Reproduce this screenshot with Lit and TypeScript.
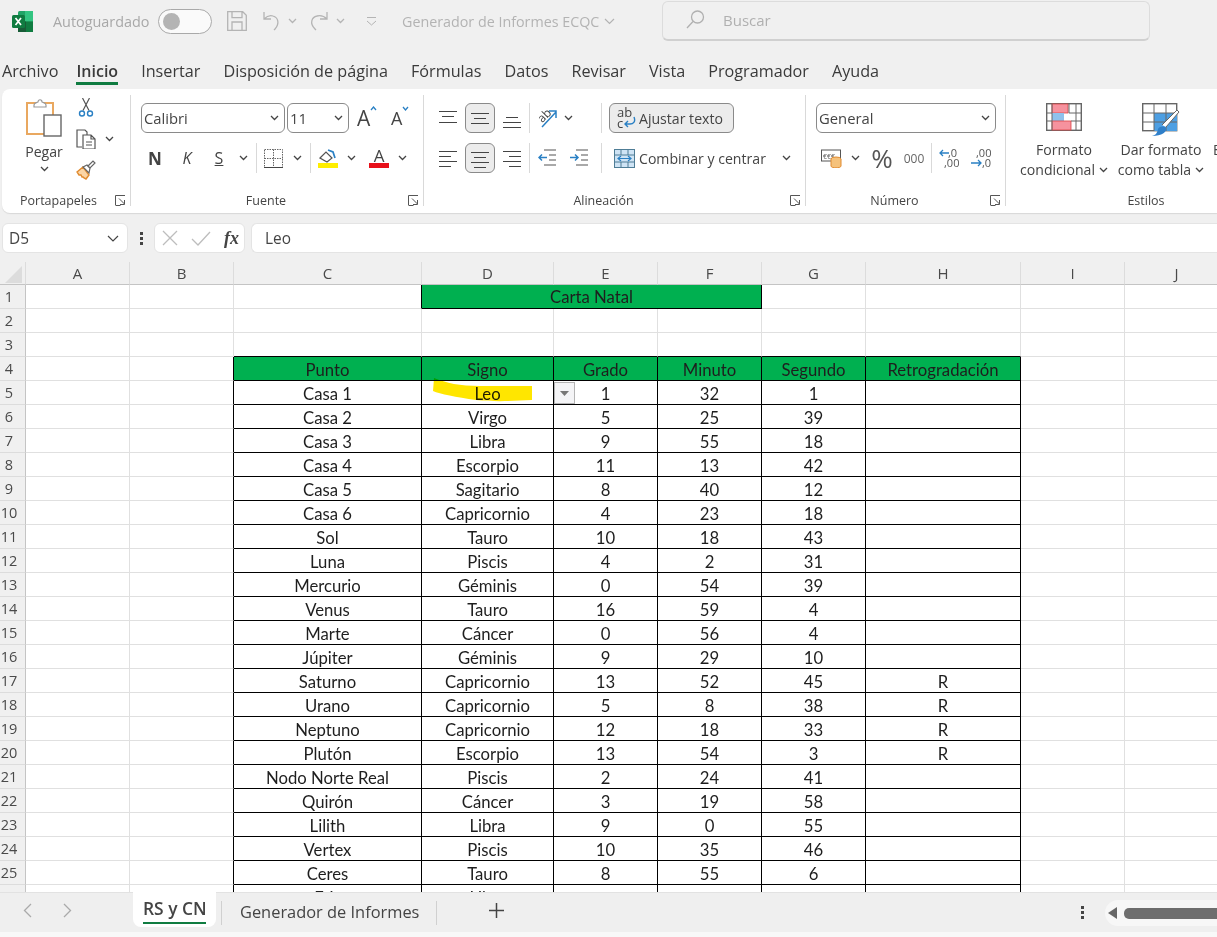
import { LitElement, html, css, svg } from "lit";
import { customElement } from "lit/decorators.js";

const chev = (c = "#444") => html`<svg class="chev" width="9" height="6" viewBox="0 0 9 6"><path d="M1 1l3.5 3.5L8 1" fill="none" stroke="${c}" stroke-width="1.3"/></svg>`;

const launcher = html`<svg class="launch" width="11" height="11" viewBox="0 0 11 11"><path d="M.5 10V.5H10M4 3.5l5.5 5.5M9.5 5v4.5H5M.5 10.5h5" fill="none" stroke="#555" stroke-width="1"/></svg>`;

const lineIcon = (rows: [number, number, number][], w = 18, h = 22, col = "#444") => html`<svg width="${w}" height="${h}" viewBox="0 0 ${w} ${h}">${rows.map(([y, a, b]) => svg`<path d="M${a} ${y}.5H${b}" stroke="${col}" stroke-width="1.2"/>`)}</svg>`;

const COLS = ["A", "B", "C", "D", "E", "F", "G", "H", "I", "J"];
type Row = [string, string, number, number, number, string?];
const DATA: Row[] = [
  ["Casa 1", "Leo", 1, 32, 1], ["Casa 2", "Virgo", 5, 25, 39], ["Casa 3", "Libra", 9, 55, 18],
  ["Casa 4", "Escorpio", 11, 13, 42], ["Casa 5", "Sagitario", 8, 40, 12], ["Casa 6", "Capricornio", 4, 23, 18],
  ["Sol", "Tauro", 10, 18, 43], ["Luna", "Piscis", 4, 2, 31], ["Mercurio", "Géminis", 0, 54, 39],
  ["Venus", "Tauro", 16, 59, 4], ["Marte", "Cáncer", 0, 56, 4], ["Júpiter", "Géminis", 9, 29, 10],
  ["Saturno", "Capricornio", 13, 52, 45, "R"], ["Urano", "Capricornio", 5, 8, 38, "R"],
  ["Neptuno", "Capricornio", 12, 18, 33, "R"], ["Plutón", "Escorpio", 13, 54, 3, "R"],
  ["Nodo Norte Real", "Piscis", 2, 24, 41], ["Quirón", "Cáncer", 3, 19, 58], ["Lilith", "Libra", 9, 0, 55],
  ["Vertex", "Piscis", 10, 35, 46], ["Ceres", "Tauro", 8, 55, 6],
];
const HEAD = ["Punto", "Signo", "Grado", "Minuto", "Segundo", "Retrogradación"];

@customElement("app-root")
export class AppRoot extends LitElement {
  static styles = css`
    :host { display: block; width: 1217px; height: 937px; overflow: hidden; background: #f0f0f0; font-family: "Open Sans", "Noto Sans", sans-serif; color: #333; }
    .app { display: flex; flex-direction: column; height: 937px; }
    svg { display: block; flex: none; }

    .title { height: 42px; margin-bottom: 6px; display: flex; align-items: center; color: #a8a8a8; font-size: 14.4px; flex: none; }
    .logo { margin-left: 12px; }
    .auto { margin-left: 20px; width: 96px; white-space: nowrap; }
    .toggle { margin-left: 9px; width: 54px; height: 25px; box-sizing: border-box; border: 1px solid #a9a9a9; border-radius: 13px; background: #fafafa; display: flex; align-items: center; padding-left: 4px; }
    .knob { width: 17px; height: 17px; border-radius: 50%; background: #b4b4b4; }
    .save { margin-left: 15px; }
    .undo { margin-left: 16px; }
    .c1 { margin-left: 7px; }
    .redo { margin-left: 10px; }
    .qa { margin-left: 21px; }
    .doc { margin-left: 25px; width: 215px; display: flex; align-items: center; gap: 5px; white-space: nowrap; font-size: 14.3px; color: #b3b3b3; }
    .search { margin-left: 45px; width: 488px; height: 40px; box-sizing: border-box; border: 1px solid #dcdcdc; border-bottom: 2px solid #d0d0d0; border-radius: 6px; display: flex; align-items: center; padding: 0 0 2px 23px; gap: 18px; font-size: 15px; color: #b0b0b0; }

    .tabs { height: 41px; flex: none; display: flex; gap: 23px; padding-left: 2px; font-size: 16.2px; color: #3a3a3a; }
    .tab { height: 37px; line-height: 46px; position: relative; white-space: nowrap; }
    .tab.on { font-weight: 600; font-size: 16px; margin-left: -5px; border-bottom: 3px solid #107c41; height: 34px; line-height: 46px; }

    .ribbon { margin-left: 2px; height: 124px; flex: none; background: #fff; border-radius: 8px 0 0 8px; box-shadow: 0 1px 1px #d8d8d8; display: flex; overflow: hidden; font-size: 14.1px; color: #444; }
    .vsep { width: 1px; height: 111px; margin-top: 6px; background: #d9d9d9; flex: none; }
    .group { position: relative; height: 124px; flex: none; display: flex; flex-direction: column; box-sizing: border-box; }
    .g1 { width: 128px; } .g2 { width: 292px; } .g3 { width: 381px; } .g4 { width: 199px; } .g5 { width: 300px; }
    .body { flex: 1; padding-top: 14px; display: flex; flex-direction: column; gap: 10px; }
    .glabel { height: 24px; line-height: 24px; font-size: 12.5px; text-align: center; padding-right: 22px; color: #444; }
    .g1 .glabel { padding-right: 15px; }
    .launch { position: absolute; right: 4px; bottom: 7px; }

    .clip { flex: 1; display: flex; padding-top: 9px; }
    .paste { margin-left: 22px; width: 40px; display: flex; flex-direction: column; align-items: center; font-size: 14.1px; }
    .paste .lab { margin-top: 4px; line-height: 20px; }
    .paste .chev { margin-top: 4px; }
    .tools { margin-left: 12px; display: flex; flex-direction: column; gap: 11px; }
    .tool { display: flex; align-items: center; gap: 9px; height: 20px; }

    .row { height: 30px; display: grid; align-items: center; justify-items: center; justify-content: start; }
    .f1 { grid-template-columns: 146px 70px 34px 26px; margin-left: 10px; justify-items: start; }
    .f2 { grid-template-columns: 32px 32px 32px 16px 10px 24px 24px 2px 34px 12px 12px 20px 8px 10px; margin-left: 8px; }
    .sel { box-sizing: border-box; height: 30px; border: 1px solid #8a8a8a; border-radius: 6px; display: flex; align-items: center; justify-content: space-between; padding: 0 5px 0 2px; background: #fff; font-size: 14.8px; color: #444; }
    .s1 { width: 144px; } .s2 { width: 62px; } .s3 { width: 180px; }
    .grow { display: flex; align-items: flex-start; }
    .grow span { font-size: 21px; line-height: 24px; }
    .grow.sm span { font-size: 18px; }
    .nb { font-weight: 700; font-size: 17px; } .nk { font-style: italic; font-size: 16px; } .ns { text-decoration: underline; font-size: 16px; }
    .thin { width: 1px; height: 30px; background: #d9d9d9; }

    .a1 { grid-template-columns: 26px 38px 26px 8px 28px 14px 22px 8px 4px 125px; margin-left: 11px; }
    .a2 { grid-template-columns: 26px 38px 26px 8px 28px 36px 8px 190px; margin-left: 11px; }
    .act { box-sizing: border-box; width: 30px; height: 30px; border: 1px solid #8a8a8a; border-radius: 6px; background: #ececec; display: flex; align-items: center; justify-content: center; }
    .wrapbtn { box-sizing: border-box; width: 125px; height: 30px; border: 1px solid #8a8a8a; border-radius: 6px; background: #ececec; display: flex; align-items: center; gap: 3px; padding-left: 7px; white-space: nowrap; }
    .merge { width: 100%; display: flex; align-items: center; gap: 4px; white-space: nowrap; padding-left: 9px; box-sizing: border-box; }
    .merge .chev { margin-left: 12px; }

    .n1 { margin-left: 10px; justify-items: start; grid-template-columns: 180px; }
    .n2 { grid-template-columns: 22px 6px 14px 6px 28px 8px 20px 14px 22px 10px 22px; margin-left: 14px; }
    .pct { font-size: 26px; line-height: 30px; color: #555; }
    .thou { font-size: 12px; color: #666; }

    .styles { flex: 1; display: flex; padding-top: 14px; padding-left: 10px; gap: 1px; }
    .sbtn { display: flex; flex-direction: column; align-items: center; width: 96px; line-height: 20px; white-space: nowrap; }
    .sbtn .txt { margin-top: 9px; text-align: center; }
    .sbtn .t3 { margin-top: 3px; }
    .sbtn .mini { display: inline-flex; align-items: center; gap: 4px; }
    .next { align-self: flex-start; margin-top: 37px; margin-left: 3px; line-height: 20px; }
    .g5 .glabel { padding-right: 0; width: 280px; }

    .fbar { margin-top: 10px; height: 30px; flex: none; display: flex; align-items: stretch; font-size: 15.4px; color: #444; }
    .name { margin-left: 2px; width: 126px; box-sizing: border-box; background: #fff; border: 1px solid #e4e4e4; border-radius: 6px; display: flex; align-items: center; justify-content: space-between; padding: 0 8px 0 6px; }
    .dots { width: 26px; display: flex; align-items: center; justify-content: center; }
    .fx { width: 91px; box-sizing: border-box; background: #fff; border: 1px solid #e4e4e4; border-radius: 6px; display: flex; align-items: center; padding: 0 5px 0 7px; justify-content: space-between; }
    .fxt { font-family: "Liberation Serif", serif; font-style: italic; font-weight: 700; font-size: 18px; color: #444; }
    .val { margin-left: 6px; flex: 1; box-sizing: border-box; background: #fff; border: 1px solid #e4e4e4; border-right: 0; border-radius: 6px 0 0 6px; padding-left: 13px; display: flex; align-items: center; }

    .sheet { margin-top: 9px; flex: 1; min-height: 0; position: relative; overflow: hidden; background: #fff; }
    .grid { display: grid; grid-template-columns: 26px 104px 104px 188px 132px 104px 104px 104px 155px 104px 104px; grid-auto-rows: 24px; grid-template-rows: 23px; font-family: Lato, "Open Sans", sans-serif; font-size: 16.7px; color: #1e1e1e; width: 1240px; }
    .cell { box-sizing: border-box; border-right: 1px solid #e0e0e0; border-bottom: 1px solid #e0e0e0; text-align: center; line-height: 26px; white-space: nowrap; overflow: hidden; }
    .hd { background: #f0f0f0; font-family: "Open Sans", sans-serif; font-size: 15px; color: #4a4a4a; line-height: 22px; border-right-color: #dcdcdc; border-bottom-color: #c4c4c4; }
    .rh { background: #f0f0f0; font-family: "Open Sans", sans-serif; font-size: 14.5px; color: #4a4a4a; border-right-color: #c4c4c4; border-bottom-color: #dcdcdc; padding-right: 7px; line-height: 23px; }
    .corner { display: flex; align-items: center; justify-content: flex-start; padding: 2px 0 0 5px; }
    .br { border-right-color: #000; } .bb { border-bottom-color: #000; }
    .green { background: #00b050; }
    .span3 { grid-column: span 3; line-height: 24px; }
    .hl { position: absolute; left: 432px; top: 114px; mix-blend-mode: multiply; }
    .dd { position: absolute; left: 554px; top: 120px; width: 21px; height: 22px; box-sizing: border-box; background: #f4f4f6; border: 1px solid #b4b4b4; display: flex; align-items: center; justify-content: center; }

    .bottom { height: 40px; flex: none; background: #efefef; border-top: 1px solid #e2e2e2; box-sizing: border-box; display: flex; font-size: 16.4px; color: #444; }
    .nav { margin-left: 23px; width: 110px; display: flex; gap: 31px; padding-top: 10px; box-sizing: border-box; }
    .sheet-tab { width: 83px; height: 35px; margin-top: -1px; background: #fff; border-radius: 0 0 8px 8px; box-sizing: border-box; padding: 0 10px; }
    .sheet-tab b { display: block; font-weight: 600; font-size: 17.4px; line-height: 25px; padding: 4px 0 1px; border-bottom: 2px solid #107c41; text-align: center; white-space: nowrap; }
    .tsep { width: 1px; height: 24px; margin-top: 8px; background: #d0d0d0; }
    .t2 { margin-left: 5px; }
    .other { width: 214px; padding-left: 18px; box-sizing: border-box; line-height: 38px; white-space: nowrap; }
    .plus { margin-left: 52px; margin-top: 10px; }
    .bdots { margin-left: 577px; margin-top: 13px; }
    .scroll { margin-left: 21px; margin-top: 7px; flex: 1; height: 26px; background: #f7f7f7; border-radius: 13px 0 0 13px; display: flex; align-items: center; padding-left: 3px; gap: 7px; }
    .thumb { flex: 1; height: 11px; background: #6e6e6e; border-radius: 5px 0 0 5px; }
    .strip { height: 5px; flex: none; background: #f8f8f8; }
  `;

  private cells() {
    const out = [];
    for (let r = 1; r <= 26; r++) {
      out.push(html`<div class="cell rh">${r}</div>`);
      for (let c = 0; c < COLS.length; c++) {
        if (r === 1 && (c === 4 || c === 5)) continue;
        const inTable = r >= 4 && c >= 2 && c <= 7;
        const cls = ["cell"];
        if (inTable || (r >= 4 && c === 1)) cls.push("br");
        if (inTable || (r === 3 && c >= 2 && c <= 7)) cls.push("bb");
        let text: unknown = "";
        if (r === 1 && c === 3) { cls.push("green", "span3", "br", "bb"); text = "Carta Natal"; }
        if (r === 1 && c === 2) cls.push("br");
        if (r === 4 && inTable) { cls.push("green"); text = HEAD[c - 2]; }
        if (r >= 5 && inTable) {
          const d = DATA[r - 5];
          if (d) text = c === 7 ? (d[5] ?? "") : d[c - 2];
          else if (c === 2) text = "Eris";
          else if (c === 3) text = "Libra";
        }
        out.push(html`<div class="${cls.join(" ")}">${text}</div>`);
      }
    }
    return out;
  }

  render() {
    return html`<div class="app">
      <div class="title">
        <svg class="logo" width="21" height="21" viewBox="0 0 21 21"><rect x="6" y="0" width="15" height="21" rx="1.5" fill="#21a366"/><rect x="13" y="0" width="8" height="10.5" fill="#33c481"/><rect x="13" y="10.5" width="8" height="10.5" fill="#107c41"/><rect x="6" y="10.5" width="8" height="10.5" fill="#185c37"/><rect x="0" y="4" width="13" height="13" rx="1.5" fill="#107c41"/><path d="M3.5 7l5.5 7M9 7l-5.5 7" stroke="#fff" stroke-width="1.7"/></svg>
        <div class="auto">Autoguardado</div>
        <div class="toggle"><div class="knob"></div></div>
        <svg class="save" width="20" height="20" viewBox="0 0 20 20" fill="none" stroke="#b4b4b4" stroke-width="1.3"><path d="M.7.7h15l3.6 3.6v15H.7zM5 .7v6h10v-6M5 19v-8h10v8"/></svg>
        <svg class="undo" width="18" height="20" viewBox="0 0 18 20" fill="none" stroke="#b4b4b4" stroke-width="1.3"><path d="M1 1v7h7M1 8c3-3 6-4 9-3 5 1.500 7 7 2 13l-1 1"/></svg>
        <span class="c1">${chev("#b4b4b4")}</span>
        <svg class="redo" width="22" height="20" viewBox="0 0 22 20" fill="none" stroke="#b4b4b4" stroke-width="1.3"><path d="M20 1v7h-7M20 8c-3-3-6-4-10-3C5 6 2 12 8 18l1 1"/></svg>
        <span class="c1">${chev("#b4b4b4")}</span>
        <svg class="qa" width="11" height="9" viewBox="0 0 11 9" fill="none" stroke="#b4b4b4"><path d="M1 .5h9M1 4l4.500 4L10 4"/></svg>
        <div class="doc">Generador de Informes ECQC <svg width="11" height="7" viewBox="0 0 11 7"><path d="M1 1l4.500 4.500L10 1" fill="none" stroke="#b3b3b3" stroke-width="1.2"/></svg></div>
        <div class="search"><svg width="19" height="19" viewBox="0 0 19 19" fill="none" stroke="#b0b0b0" stroke-width="1.3"><circle cx="11.500" cy="7" r="6"/><path d="M7 11.500L1 18"/></svg><span>Buscar</span></div>
      </div>

      <div class="tabs">
        <div class="tab">Archivo</div><div class="tab on">Inicio</div><div class="tab">Insertar</div>
        <div class="tab">Disposición de página</div><div class="tab">Fórmulas</div><div class="tab">Datos</div>
        <div class="tab">Revisar</div><div class="tab">Vista</div><div class="tab">Programador</div><div class="tab">Ayuda</div>
      </div>

      <div class="ribbon">
        <div class="group g1">
          <div class="clip">
            <div class="paste">
              <svg width="36" height="40" viewBox="0 0 36 40"><rect x="1" y="5" width="26" height="31" fill="#fff" stroke="#e9a860" stroke-width="2"/><path d="M8 7c0-2 2-2 4-3 0-3 4-3 4 0 2 1 4 1 4 3v2H8z" fill="#fff" stroke="#999" stroke-width="1.2"/><rect x="18" y="17" width="17" height="21" fill="#fff" stroke="#666" stroke-width="1.4"/></svg>
              <span class="lab">Pegar</span>${chev()}
            </div>
            <div class="tools">
              <div class="tool"><svg width="20" height="20" viewBox="0 0 20 20" fill="none"><path d="M7 12.500L13.500 0M13 12.500L6.500 0" stroke="#555" stroke-width="1.2"/><circle cx="6" cy="15.500" r="2.500" stroke="#2a80c4" stroke-width="1.4"/><circle cx="14" cy="15.500" r="2.500" stroke="#2a80c4" stroke-width="1.4"/></svg></div>
              <div class="tool"><svg width="20" height="20" viewBox="0 0 20 20" fill="none" stroke="#555" stroke-width="1.2"><path d="M6 18H1V1h8l2 2v3"/><path d="M7 6h8l4 4v10H7zM15 6v4h4" fill="#fff"/><path d="M10 13h6M10 16h6"/></svg>${chev()}</div>
              <div class="tool"><svg width="20" height="20" viewBox="0 0 20 20"><path d="M1 12l6-5 6 8-3 4-2-1-1-1-1 0-1-2-2 0z" fill="#fbd5a5" stroke="#e08a2e" stroke-width="1.4"/><path d="M7 7l4-2 3 3-1 5z" fill="#fff" stroke="#666" stroke-width="1.200"/><path d="M12 6l5-5 2 2-5 5z" fill="#fff" stroke="#666" stroke-width="1.200"/></svg></div>
            </div>
          </div>
          <div class="glabel">Portapapeles</div>${launcher}
        </div>
        <div class="vsep"></div>

        <div class="group g2">
          <div class="body">
            <div class="row f1">
              <div class="sel s1">Calibri ${chev()}</div>
              <div class="sel s2">11 ${chev()}</div>
              <div class="grow"><span>A</span><svg width="7" height="5" viewBox="0 0 7 5"><path d="M1 4l2.500-3L6 4" fill="none" stroke="#2a80c4" stroke-width="1.300"/></svg></div>
              <div class="grow sm"><span>A</span><svg width="7" height="5" viewBox="0 0 7 5"><path d="M1 1l2.500 3L6 1" fill="none" stroke="#2a80c4" stroke-width="1.300"/></svg></div>
            </div>
            <div class="row f2">
              <span class="nb">N</span><span class="nk">K</span><span class="ns">S</span>${chev()}
              <span class="thin"></span>
              <svg width="19" height="19" viewBox="0 0 19 19" fill="none" stroke="#666"><path stroke-dasharray="1.500 1" d="M.5.5h18v18H.5zM9.500.5v18M.5 9.500h18"/><path d="M0 18.500h19" stroke="#444"/></svg>
              ${chev()}
              <span class="thin"></span>
              <svg width="20" height="20" viewBox="0 0 20 20"><path d="M2 10l6-6 6 6-5 4z" fill="#fff" stroke="#555" stroke-width="1.200"/><path d="M10 2l5 2 2 6" fill="none" stroke="#2a80c4" stroke-width="1.700"/><rect y="15" width="20" height="5" fill="#ffee00"/></svg>
              ${chev()}
              <span></span>
              <svg width="20" height="20" viewBox="0 0 20 20"><text x="10" y="14" text-anchor="middle" font-size="17" fill="#444" font-family="Open Sans">A</text><rect y="15" width="20" height="5" fill="#e8101a"/></svg>
              <span></span>
              ${chev()}
            </div>
          </div>
          <div class="glabel">Fuente</div>${launcher}
        </div>
        <div class="vsep"></div>

        <div class="group g3">
          <div class="body">
            <div class="row a1">
              ${lineIcon([[4, 0, 18], [9, 3, 15], [15, 0, 18]])}
              <div class="act">${lineIcon([[6, 0, 18], [11, 3, 15], [16, 0, 18]])}</div>
              ${lineIcon([[10, 3, 15], [15, 0, 18], [20, 0, 18]])}
              <span class="thin"></span>
              <svg width="22" height="20" viewBox="0 0 22 20"><text x="2" y="13" font-size="12" fill="#444" font-family="Open Sans" transform="rotate(-45 7 9)">ab</text><path d="M6 19L20 4M13 3h7v7" fill="none" stroke="#2a80c4" stroke-width="1.500"/></svg>
              ${chev()}
              <span></span>
              <span class="thin"></span>
              <span></span>
              <div class="wrapbtn"><svg width="19" height="24" viewBox="0 0 19 24"><text x="0" y="11" font-size="13" fill="#444" font-family="Open Sans">ab</text><text x="0" y="22" font-size="13" fill="#444" font-family="Open Sans">c</text><path d="M17 11c2 5-1 7-4 7H8M11 15l-3 3 3 3" fill="none" stroke="#2a80c4" stroke-width="1.400"/></svg><span>Ajustar texto</span></div>
            </div>
            <div class="row a2">
              ${lineIcon([[4, 0, 18], [9, 0, 12], [14, 0, 18], [19, 0, 12]])}
              <div class="act">${lineIcon([[5, 0, 18], [10, 3, 15], [15, 0, 18], [20, 3, 15]])}</div>
              ${lineIcon([[4, 0, 18], [9, 6, 18], [14, 0, 18], [19, 6, 18]])}
              <span class="thin"></span>
              <svg width="18" height="18" viewBox="0 0 18 18" fill="none"><path d="M6 1h12M11 6h7M11 11h7M6 16h12" stroke="#555" stroke-width="1.200"/><path d="M9 8.500H1M4 5.500L1 8.500l3 3" stroke="#2a80c4" stroke-width="1.500"/></svg>
              <svg width="18" height="18" viewBox="0 0 18 18" fill="none"><path d="M6 1h12M11 6h7M11 11h7M6 16h12" stroke="#555" stroke-width="1.200"/><path d="M0 8.500h8M5 5.500l3 3-3 3" stroke="#2a80c4" stroke-width="1.500"/></svg>
              <span class="thin"></span>
              <div class="merge"><svg width="21" height="19" viewBox="0 0 21 19"><rect x=".5" y=".5" width="20" height="18" fill="#cfe4f5" stroke="#4f7d96"/><path d="M.5 6h20M.5 13h20M7 .5V6M14 .5V6M7 13v6M14 13v6" stroke="#4f7d96"/><path d="M4 9.500h13M7 7L4 9.500 7 12M14 7l3 2.500-3 2.500" fill="none" stroke="#2a80c4" stroke-width="1.200"/></svg><span>Combinar y centrar</span>${chev()}</div>
            </div>
          </div>
          <div class="glabel">Alineación</div>${launcher}
        </div>
        <div class="vsep"></div>

        <div class="group g4">
          <div class="body">
            <div class="row n1"><div class="sel s3">General ${chev()}</div></div>
            <div class="row n2">
              <svg width="21" height="19" viewBox="0 0 21 19"><rect x=".5" y="1" width="19" height="11" fill="#fff" stroke="#555"/><text x="2" y="10" font-size="7" fill="#555" font-family="Open Sans">€€€</text><ellipse cx="15" cy="10" rx="5" ry="2" fill="#f5c27c" stroke="#e08a2e"/><path d="M10 10v7c0 2.500 10 2.500 10 0v-7" fill="#f5c27c" stroke="#e08a2e"/></svg>
              <span></span>${chev()}<span></span>
              <span class="pct">%</span>
              <span></span>
              <span class="thou">000</span>
              <span class="thin"></span>
              <svg width="20" height="22" viewBox="0 0 20 22"><text x="9" y="10" font-size="11" fill="#555" font-family="Open Sans">,0</text><text x="5" y="20" font-size="11" fill="#555" font-family="Open Sans">,00</text><path d="M10 6H1M4 3L1 6l3 3" fill="none" stroke="#2a80c4" stroke-width="1.300"/></svg>
              <span></span>
              <svg width="20" height="22" viewBox="0 0 20 22"><text x="5" y="10" font-size="11" fill="#555" font-family="Open Sans">,00</text><text x="11" y="20" font-size="11" fill="#555" font-family="Open Sans">,0</text><path d="M0 16h10M7 13l3 3-3 3" fill="none" stroke="#2a80c4" stroke-width="1.300"/></svg>
            </div>
          </div>
          <div class="glabel">Número</div>${launcher}
        </div>
        <div class="vsep"></div>

        <div class="group g5">
          <div class="styles">
            <div class="sbtn">
              <svg width="36" height="28" viewBox="0 0 36 28"><rect x=".7" y=".7" width="34.600" height="26.600" fill="#fff" stroke="#666" stroke-width="1.400"/><rect x="6" y="1" width="16" height="9" fill="#f6929e" stroke="#d44" stroke-width=".8"/><rect x="6" y="10" width="12" height="8" fill="#8fc1ec"/><rect x="6" y="18" width="19" height="9" fill="#f6929e" stroke="#d44" stroke-width=".8"/><path d="M6 1v26M23 1v9M30 1v26M1 10h5M1 18h5M23 10h12M25 18h10" stroke="#666"/></svg>
              <div class="txt">Formato<br /><span class="mini">condicional ${chev()}</span></div>
            </div>
            <div class="sbtn">
              <svg width="38" height="34" viewBox="0 0 38 34"><rect x=".7" y=".7" width="34" height="27" fill="#fff" stroke="#666" stroke-width="1.400"/><rect x="12" y="10" width="23" height="18" fill="#4d9fe3"/><path d="M12 1v27M24 1v27M1 10h34M1 19h34" stroke="#666"/><path d="M20 22L35 7l2 2-13 15" fill="#fff" stroke="#666"/><path d="M10 33c4-1 5-3 6-7 2-3 6-3 8-1 1 4-4 8-14 8z" fill="#2f7fc9"/></svg>
              <div class="txt t3">Dar formato<br /><span class="mini">como tabla ${chev()}</span></div>
            </div>
            <div class="next">E</div>
          </div>
          <div class="glabel">Estilos</div>
        </div>
      </div>

      <div class="fbar">
        <div class="name"><span>D5</span><svg width="12" height="7" viewBox="0 0 12 7"><path d="M1 1l5 5 5-5" fill="none" stroke="#444" stroke-width="1.200"/></svg></div>
        <div class="dots"><svg width="3" height="13" viewBox="0 0 3 13" fill="#444"><rect width="3" height="3"/><rect y="5" width="3" height="3"/><rect y="10" width="3" height="3"/></svg></div>
        <div class="fx">
          <svg width="16" height="16" viewBox="0 0 16 16"><path d="M1 1l14 14M15 1L1 15" stroke="#bdbdbd" stroke-width="1.300"/></svg>
          <svg width="20" height="15" viewBox="0 0 20 15"><path d="M1 8l6 6L19 1" fill="none" stroke="#bdbdbd" stroke-width="1.300"/></svg>
          <span class="fxt">fx</span>
        </div>
        <div class="val">Leo</div>
      </div>

      <div class="sheet">
        <div class="grid">
          <div class="cell hd corner"><svg width="17" height="17" viewBox="0 0 17 17"><path d="M17 0v17H0z" fill="#dcdcdc"/></svg></div>
          ${COLS.map((c) => html`<div class="cell hd">${c}</div>`)}
          ${this.cells()}
        </div>
        <svg class="hl" width="102" height="28" viewBox="0 0 102 28"><path d="M2 2c12 5 26 8 46 8h52v14c-20 1-36 2-56 0-20-3-36-6-43-9z" fill="#ffe600"/></svg>
        <div class="dd"><svg width="9" height="5" viewBox="0 0 9 5"><path d="M0 0h9L4.500 5z" fill="#777"/></svg></div>
      </div>

      <div class="bottom">
        <div class="nav">
          <svg width="9" height="15" viewBox="0 0 9 15"><path d="M8 1L1.500 7.500 8 14" fill="none" stroke="#aaa" stroke-width="1.300"/></svg>
          <svg width="9" height="15" viewBox="0 0 9 15"><path d="M1 1l6.500 6.500L1 14" fill="none" stroke="#aaa" stroke-width="1.300"/></svg>
        </div>
        <div class="sheet-tab"><b>RS y CN</b></div>
        <div class="tsep t2"></div>
        <div class="other">Generador de Informes</div>
        <div class="tsep"></div>
        <svg class="plus" width="15" height="15" viewBox="0 0 15 15"><path d="M7.500 0v15M0 7.500h15" stroke="#444" stroke-width="1.500"/></svg>
        <svg class="bdots" width="3" height="13" viewBox="0 0 3 13" fill="#444"><rect width="3" height="3"/><rect y="5" width="3" height="3"/><rect y="10" width="3" height="3"/></svg>
        <div class="scroll"><svg width="9" height="12" viewBox="0 0 9 12"><path d="M9 0v12L0 6z" fill="#666"/></svg><div class="thumb"></div></div>
      </div>
      <div class="strip"></div>
    </div>`;
  }
}
